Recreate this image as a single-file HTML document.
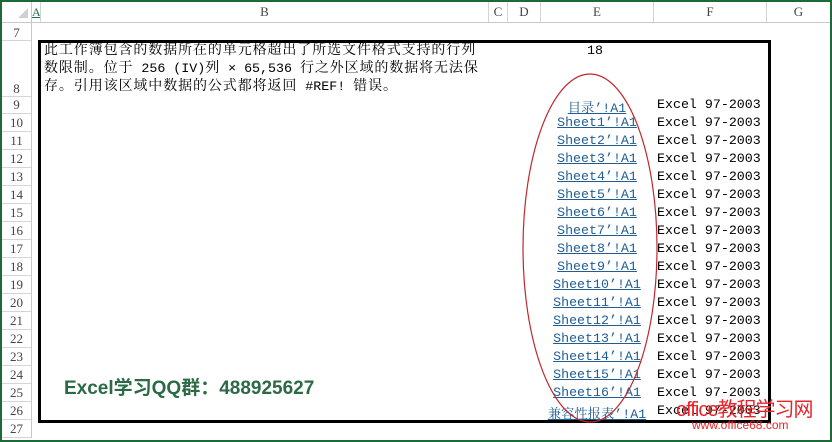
<!DOCTYPE html>
<html><head><meta charset="utf-8"><style>
body{margin:0;width:832px;height:442px;overflow:hidden;background:#fff;font-family:"Liberation Mono","Noto Sans CJK SC",monospace;}
.frame{position:absolute;left:0;top:0;width:828px;height:438px;border:2px solid #1d6a38;}
.abs{position:absolute;}
.hdr{position:absolute;top:2px;height:20px;background:#fff;border-bottom:1px solid #c8c8c8;color:#444;font-size:13px;line-height:20px;text-align:center;font-family:"Liberation Serif",serif;}
.vl{position:absolute;top:2px;height:20px;border-left:1px solid #d4d4d4;}
.rn{position:absolute;left:2px;width:29px;color:#444;font-size:13px;text-align:center;font-family:"Liberation Serif",serif;border-bottom:1px solid #d4d4d4;}
.lk{position:absolute;left:540px;width:114px;text-align:center;color:#1f5d96;text-decoration:underline;font-size:13.3px;white-space:nowrap;font-family:"Liberation Mono","Noto Serif CJK SC",monospace;}
.ex{position:absolute;left:657px;font-size:13.3px;color:#000;white-space:nowrap;}
.l{letter-spacing:0;font-size:13.3px;}
</style></head><body>
<div class="frame"></div>
<div class="hdr" style="left:2px;width:828px"></div>
<div class="abs" style="left:31px;top:2px;width:1px;height:436px;background:#c8c8c8"></div>
<div class="abs" style="left:18px;top:8px;width:0;height:0;border-left:10px solid transparent;border-bottom:10px solid #d0d0d0"></div>
<div class="hdr" style="left:32px;width:8px;color:#217346;text-decoration:underline;font-size:12px;border:none">A</div>
<div class="vl" style="left:40px"></div>
<div class="hdr" style="left:41px;width:447px;border:none">B</div>
<div class="vl" style="left:488px"></div>
<div class="hdr" style="left:489px;width:18px;border:none">C</div>
<div class="vl" style="left:507px"></div>
<div class="hdr" style="left:508px;width:32px;border:none">D</div>
<div class="vl" style="left:540px"></div>
<div class="hdr" style="left:541px;width:112px;border:none">E</div>
<div class="vl" style="left:653px"></div>
<div class="hdr" style="left:654px;width:112px;border:none">F</div>
<div class="vl" style="left:766px"></div>
<div class="hdr" style="left:767px;width:63px;border:none">G</div>
<div class="rn" style="top:23px;height:17px;line-height:20px">7</div>
<div class="rn" style="top:41px;height:55px;line-height:95px">8</div>
<div id="rows"></div>
<div class="abs" style="left:38px;top:40px;width:727px;height:377px;border:3px solid #000"></div>
<div class="abs" style="left:44px;top:42px;font-size:14px;letter-spacing:0.9px;line-height:18px;color:#000;white-space:nowrap;font-family:'Liberation Mono','Noto Serif CJK SC',monospace">此工作簿包含的数据所在的单元格超出了所选文件格式支持的行列<br>数限制。位于<span class="l"> 256 (IV)</span>列<span class="l"> × 65,536 </span>行之外区域的数据将无法保<br>存。引用该区域中数据的公式都将返回<span class="l"> #REF! </span>错误。</div>
<div class="abs" style="left:587px;top:43px;font-size:13.3px">18</div>
<div class="abs" style="left:64px;top:373px;font-size:19px;color:#2b6a45;font-weight:bold;font-family:'Liberation Sans','Noto Sans CJK SC',sans-serif">Excel学习QQ群：488925627</div>
<svg class="abs" style="left:0;top:0" width="832" height="442"><ellipse cx="590" cy="248" rx="67" ry="174" fill="none" stroke="#c0272d" stroke-width="1.2"/></svg>
<div class="abs" style="left:676px;top:393px;font-size:20px;color:#e8232a;font-family:'Liberation Sans','Noto Sans CJK SC',sans-serif;letter-spacing:-1px">office教程学习网</div>
<div class="abs" style="left:692px;top:418px;font-size:12px;color:#e8232a;font-family:'Liberation Sans',sans-serif">www.office68.com</div>
<script>
var r=document.getElementById('rows'),h='';
var names=['目录\u2019!A1'];for(var i=1;i<=16;i++)names.push('Sheet'+i+'\u2019!A1');names.push('兼容性报表\u2019!A1');
for(var n=9;n<=27;n++){var t=96+(n-9)*18;h+='<div class="rn" style="top:'+t+'px;height:17px;line-height:18px">'+n+'</div>';
var k=n-9;if(k<names.length){h+='<div class="lk" style="top:'+(t+1)+'px">'+names[k]+'</div><div class="ex" style="top:'+(t+1)+'px">Excel 97-2003</div>';}}
r.innerHTML=h;
</script>
</body></html>
